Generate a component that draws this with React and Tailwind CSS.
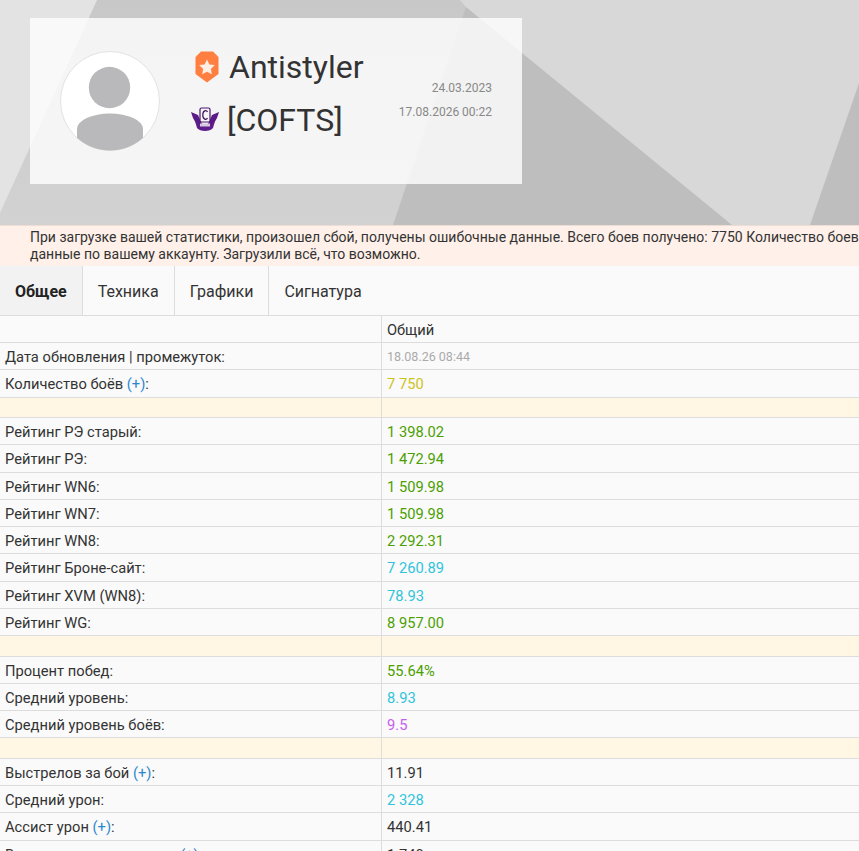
import React from 'react'

const rows = [
  { label: 'Дата обновления | промежуток:', value: '18.08.26 08:44', color: 'text-[#aaaaaa] text-[12.500px]' },
  { label: 'Количество боёв', plus: true, value: '7 750', color: 'text-[#cdc21c]' },
  { spacer: true },
  { label: 'Рейтинг РЭ старый:', value: '1 398.02', color: 'text-[#4c9f00]' },
  { label: 'Рейтинг РЭ:', value: '1 472.94', color: 'text-[#4c9f00]' },
  { label: 'Рейтинг WN6:', value: '1 509.98', color: 'text-[#4c9f00]' },
  { label: 'Рейтинг WN7:', value: '1 509.98', color: 'text-[#4c9f00]' },
  { label: 'Рейтинг WN8:', value: '2 292.31', color: 'text-[#4c9f00]' },
  { label: 'Рейтинг Броне-сайт:', value: '7 260.89', color: 'text-[#2fc4dc]' },
  { label: 'Рейтинг XVM (WN8):', value: '78.93', color: 'text-[#2fc4dc]' },
  { label: 'Рейтинг WG:', value: '8 957.00', color: 'text-[#4c9f00]' },
  { spacer: true },
  { label: 'Процент побед:', value: '55.64%', color: 'text-[#4c9f00]' },
  { label: 'Средний уровень:', value: '8.93', color: 'text-[#2fc4dc]' },
  { label: 'Средний уровень боёв:', value: '9.5', color: 'text-[#c75df0]' },
  { spacer: true },
  { label: 'Выстрелов за бой', plus: true, value: '11.91', color: 'text-[#333333]' },
  { label: 'Средний урон:', value: '2 328', color: 'text-[#2fc4dc]' },
  { label: 'Ассист урон', plus: true, value: '440.41', color: 'text-[#333333]' },
  { label: 'Выдержано урона в игре', plus: true, value: '1 740', color: 'text-[#333333]' },
]

const tabs = ['Общее', 'Техника', 'Графики', 'Сигнатура']

const HeaderBackground = () => (
  <svg className="absolute inset-0 w-full h-full" viewBox="0 0 859 225" preserveAspectRatio="none">
    <defs>
      <linearGradient id="bg-base" x1="0" y1="0" x2="0" y2="1">
        <stop offset="0" stopColor="#c8c8c8" />
        <stop offset="1" stopColor="#d2d2d2" />
      </linearGradient>
    </defs>
    <rect width="859" height="225" fill="url(#bg-base)" />
    <polygon points="0,0 97,0 0,213" fill="#e3e3e3" />
    <polygon points="466,7 859,7 859,225 393,225" fill="#bebebe" />
    <polygon points="460,0 859,0 859,83 810,225 732,225 466,7" fill="#d8d8d8" />
  </svg>
)

const Avatar = () => (
  <svg className="w-[100px] h-[100px] shrink-0" viewBox="0 0 100 100">
    <defs>
      <clipPath id="avatar-clip">
        <circle cx="50" cy="50" r="49.500" />
      </clipPath>
    </defs>
    <circle cx="50" cy="50" r="49.500" fill="#fff" stroke="#e2e2e2" />
    <g clipPath="url(#avatar-clip)">
      <circle cx="49.500" cy="36.500" r="20.700" fill="#b9b9bb" />
      <ellipse cx="50" cy="78" rx="33" ry="15.500" fill="#b9b9bb" />
      <rect x="17" y="78" width="66" height="22" fill="#b9b9bb" />
    </g>
  </svg>
)

const Badge = () => (
  <svg className="w-6 h-[32px] shrink-0" viewBox="0 0 24 32">
    <path d="M6 0.500h12l5.500 5.500v17L12 31.500 0.500 23V6z" fill="#ff7f41" />
    <path d="M12 8.500l2.400 4.900 5.400.7-3.900 3.800.9 5.400-4.800-2.600-4.800 2.600.9-5.400-3.900-3.800 5.400-.7z" fill="#ffeee4" />
  </svg>
)

const ClanEmblem = () => (
  <svg className="w-[30px] h-[27px] shrink-0" viewBox="0 0 30 27">
    {/* wings */}
    <path d="M1 6l7 3 3 7 2 3H7L3 12z" fill="#5b1a86" />
    <path d="M29 6l-7 3-3 7-2 3h6l4-7z" fill="#5b1a86" />
    {/* lower crescent */}
    <path d="M5 15c2 5 18 5 20 0l-2 7c-3 4-13 4-16 0z" fill="#5e1c8c" />
    <rect x="10" y="17.500" width="10" height="3" fill="#d8c8e0" />
    {/* crest */}
    <rect x="10" y="2" width="10" height="14" rx="1.500" fill="#f7f4f8" stroke="#4b1670" strokeWidth="1.200" />
    <path d="M17.500 6C16.500 4 12.800 4 12.800 9s3.700 5 4.700 3" fill="none" stroke="#3a1058" strokeWidth="1.200" />
  </svg>
)

export default function App() {
  return (
    <div className="w-[859px] h-[851px] overflow-hidden bg-white text-[#333333] text-[14.700px] font-['Roboto',sans-serif]">
      {/* Profile header */}
      <div className="relative h-[225px]">
        <HeaderBackground />
        <div className="relative top-[18px] ml-[30px] w-[492px] h-[166px] bg-white/80 flex items-center pl-[30px] pr-[30px]">
          <Avatar />
          <div className="ml-[30px] flex flex-col gap-[15px] -mt-[16px]">
            <div className="flex items-center gap-[10px] ml-[5px] h-[38px]">
              <Badge />
              <span className="text-[32px] leading-none text-[#333333]">Antistyler</span>
            </div>
            <div className="flex items-center gap-[7px] h-[38px]">
              <ClanEmblem />
              <span className="text-[32px] leading-none text-[#333333]">[COFTS]</span>
            </div>
          </div>
          <div className="ml-auto flex flex-col items-end gap-[8px] text-xs leading-[16px] text-[#888888] -mt-[2px]">
            <span>24.03.2023</span>
            <span>17.08.2026 00:22</span>
          </div>
        </div>
      </div>

      {/* Error message */}
      <div className="h-[41px] bg-[#fff0e9] border-t border-[#eedcd5] pl-[30px] pt-[3px] text-sm leading-[17px] whitespace-nowrap overflow-hidden">
        При загрузке вашей статистики, произошел сбой, получены ошибочные данные. Всего боев получено: 7750 Количество боев
        <br />
        данные по вашему аккаунту. Загрузили всё, что возможно.
      </div>

      {/* Tabs */}
      <div className="flex h-[50px] bg-[#fafafa] border-b border-[#dddddd] text-base">
        {tabs.map((t, i) => (
          <div
            key={t}
            className={i === 0
              ? 'flex items-center px-[15px] pt-[2px] border-r border-[#dddddd] bg-[#f2f2f2] font-bold text-[#222222]'
              : 'flex items-center px-[15px] pt-[2px] border-r border-[#dddddd] last:border-r-0'}
          >
            {t}
          </div>
        ))}
      </div>

      {/* Stats table */}
      <div className="grid grid-cols-[382px_1fr] bg-[#fafafa]">
        <div className="h-[27px] border-b border-r border-[#dddddd]"></div>
        <div className="h-[27px] pt-[2px] border-b border-[#dddddd] flex items-center px-[5px]">Общий</div>
        {rows.map((row, i) => row.spacer ? (
          <React.Fragment key={i}>
            <div className="h-[20.500px] bg-[#fff6e3] border-b border-r border-[#dddddd]"></div>
            <div className="h-[20.500px] bg-[#fff6e3] border-b border-[#dddddd]"></div>
          </React.Fragment>
        ) : (
          <React.Fragment key={i}>
            <div className="h-[27.250px] pt-[2px] border-b border-r border-[#dddddd] flex items-center px-[5px] whitespace-pre">
              {row.label}
              {row.plus && <> <span className="text-[#2a88d0]">(+)</span>:</>}
            </div>
            <div className={`h-[27.250px] pt-[2px] border-b border-[#dddddd] flex items-center px-[5px] ${row.color}`}>
              {row.value}
            </div>
          </React.Fragment>
        ))}
      </div>
    </div>
  )
}
